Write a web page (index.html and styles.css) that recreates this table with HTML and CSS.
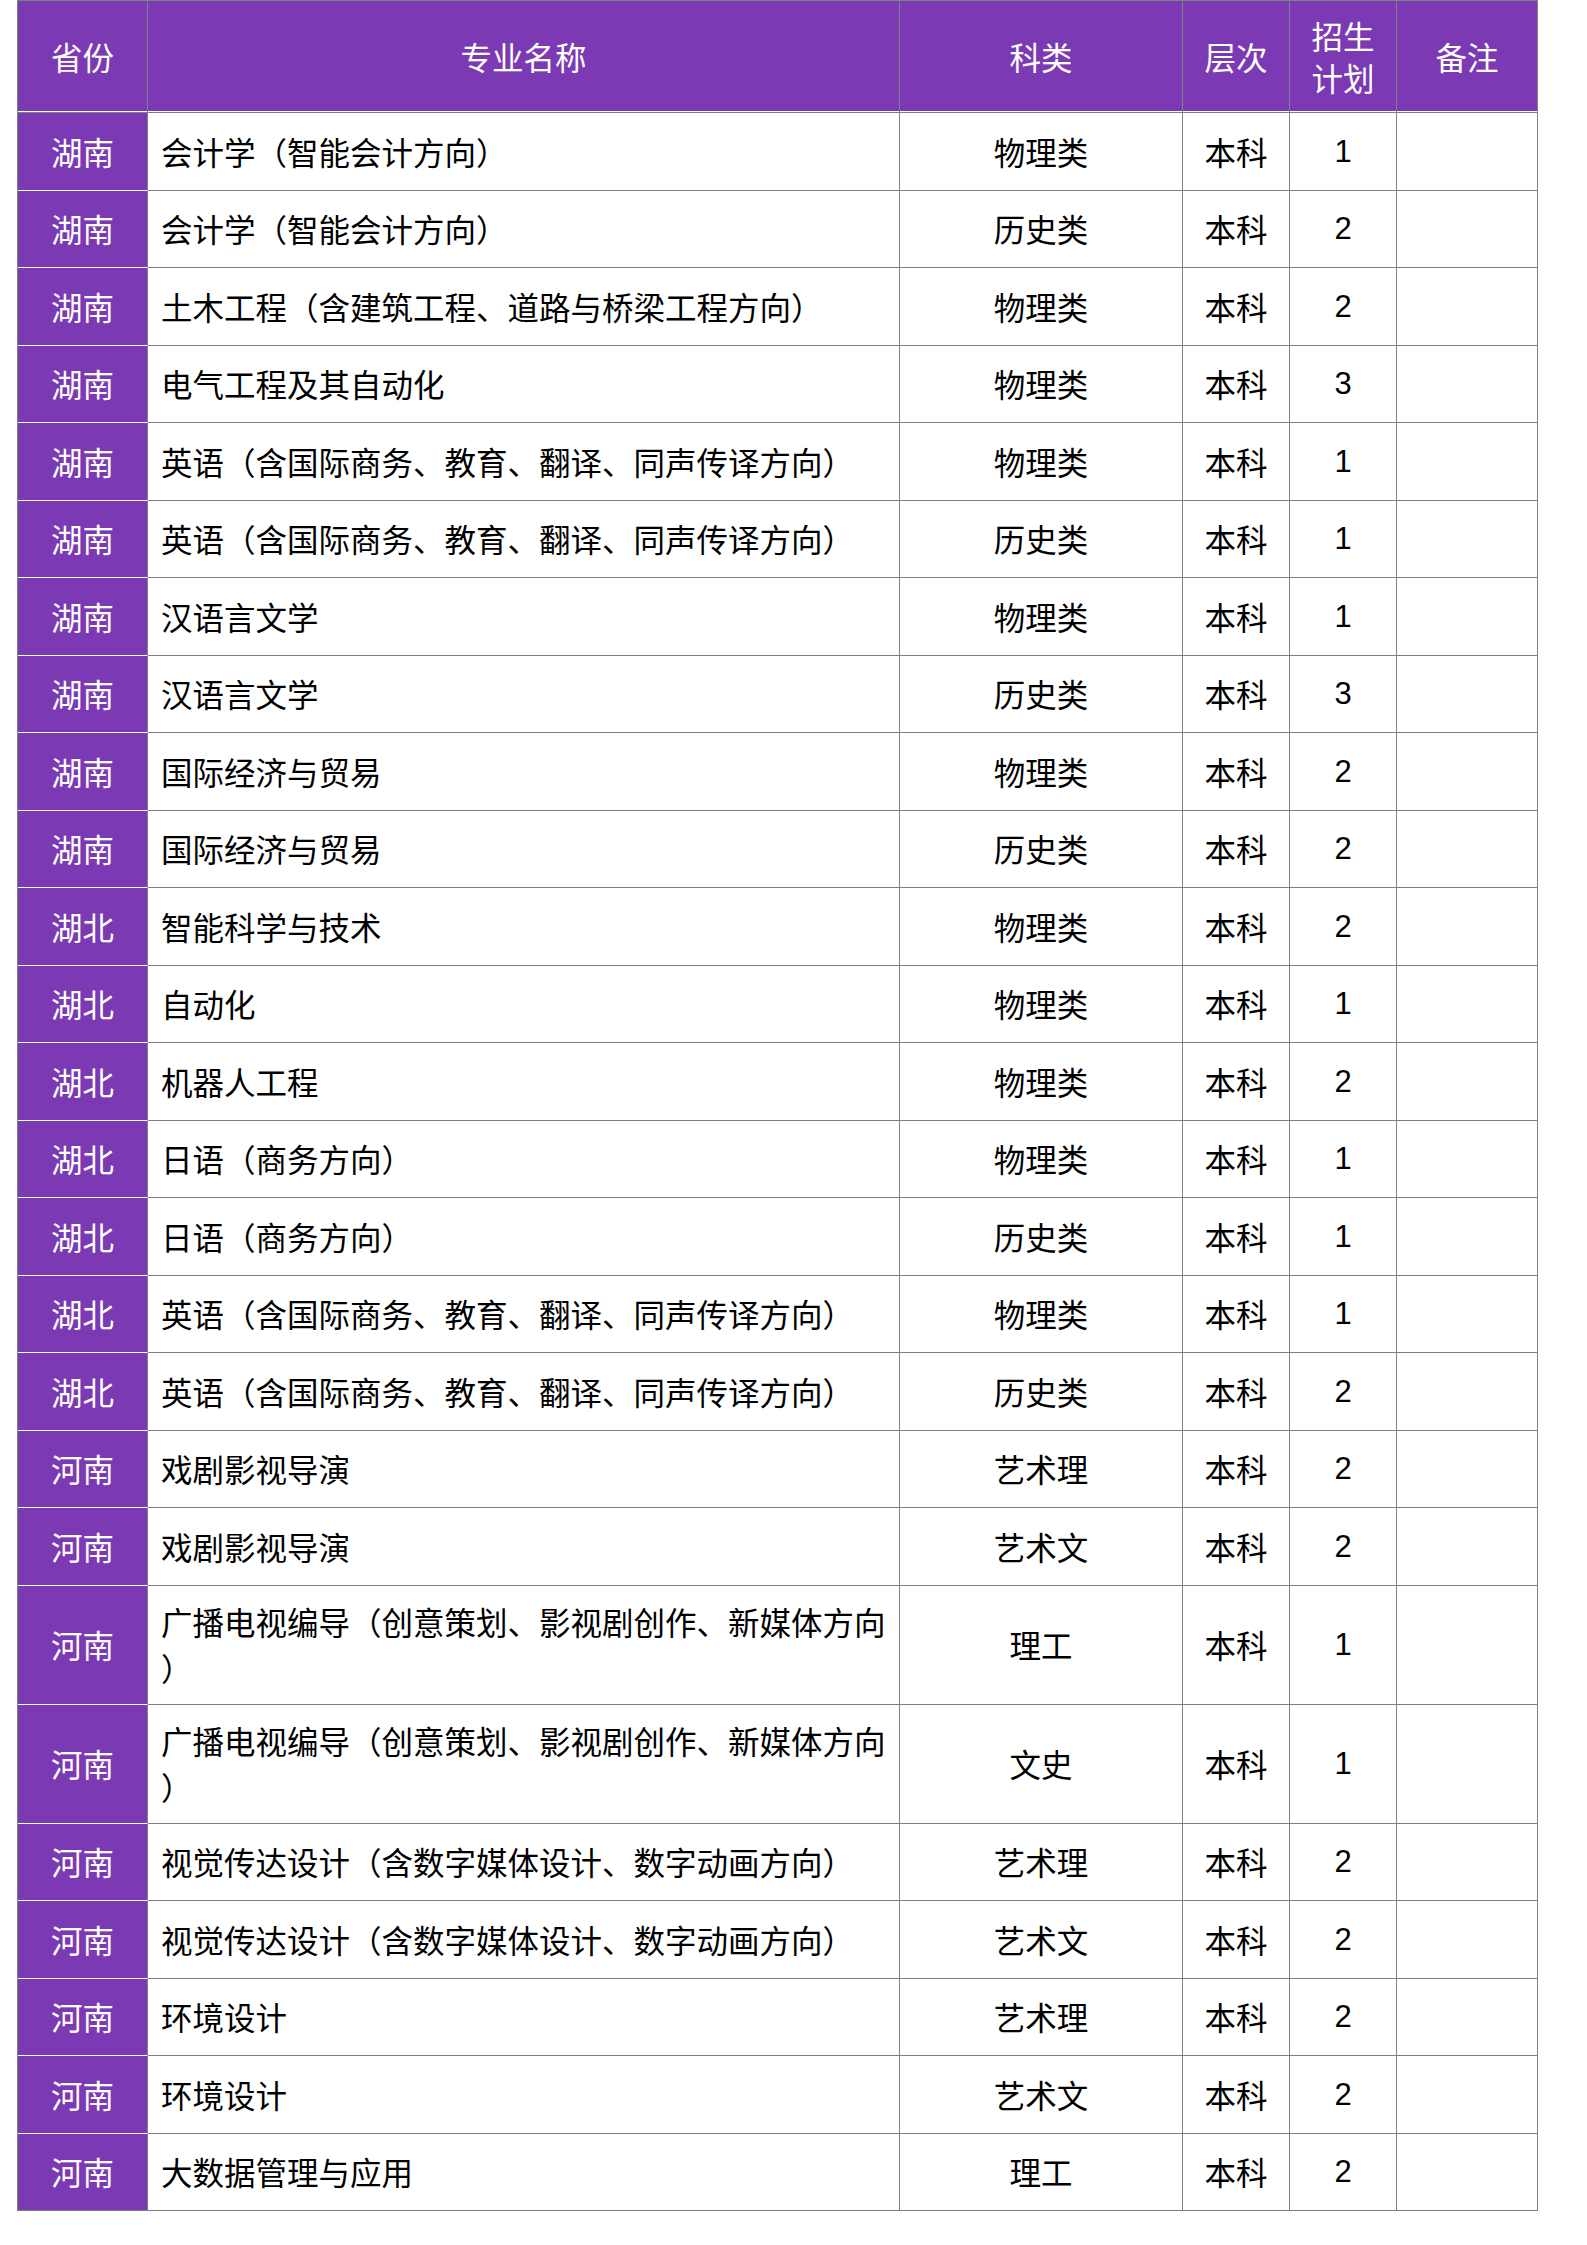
FILE: index.html
```html
<!DOCTYPE html>
<html lang="zh-CN">
<head>
<meta charset="utf-8">
<title>招生计划</title>
<link rel="stylesheet" href="styles.css">
</head>
<body>
<table class="plan">
  <thead>
    <tr>
      <th class="c-prov">省份</th>
      <th class="c-major">专业名称</th>
      <th class="c-type">科类</th>
      <th class="c-level">层次</th>
      <th class="c-num">招生计划</th>
      <th class="c-note">备注</th>
    </tr>
  </thead>
  <tbody>
    <tr><td class="prov">湖南</td><td class="major">会计学（智能会计方向）</td><td class="mid">物理类</td><td class="mid">本科</td><td class="num">1</td><td></td></tr>
    <tr><td class="prov">湖南</td><td class="major">会计学（智能会计方向）</td><td class="mid">历史类</td><td class="mid">本科</td><td class="num">2</td><td></td></tr>
    <tr><td class="prov">湖南</td><td class="major">土木工程（含建筑工程、道路与桥梁工程方向）</td><td class="mid">物理类</td><td class="mid">本科</td><td class="num">2</td><td></td></tr>
    <tr><td class="prov">湖南</td><td class="major">电气工程及其自动化</td><td class="mid">物理类</td><td class="mid">本科</td><td class="num">3</td><td></td></tr>
    <tr><td class="prov">湖南</td><td class="major">英语（含国际商务、教育、翻译、同声传译方向）</td><td class="mid">物理类</td><td class="mid">本科</td><td class="num">1</td><td></td></tr>
    <tr><td class="prov">湖南</td><td class="major">英语（含国际商务、教育、翻译、同声传译方向）</td><td class="mid">历史类</td><td class="mid">本科</td><td class="num">1</td><td></td></tr>
    <tr><td class="prov">湖南</td><td class="major">汉语言文学</td><td class="mid">物理类</td><td class="mid">本科</td><td class="num">1</td><td></td></tr>
    <tr><td class="prov">湖南</td><td class="major">汉语言文学</td><td class="mid">历史类</td><td class="mid">本科</td><td class="num">3</td><td></td></tr>
    <tr><td class="prov">湖南</td><td class="major">国际经济与贸易</td><td class="mid">物理类</td><td class="mid">本科</td><td class="num">2</td><td></td></tr>
    <tr><td class="prov">湖南</td><td class="major">国际经济与贸易</td><td class="mid">历史类</td><td class="mid">本科</td><td class="num">2</td><td></td></tr>
    <tr><td class="prov">湖北</td><td class="major">智能科学与技术</td><td class="mid">物理类</td><td class="mid">本科</td><td class="num">2</td><td></td></tr>
    <tr><td class="prov">湖北</td><td class="major">自动化</td><td class="mid">物理类</td><td class="mid">本科</td><td class="num">1</td><td></td></tr>
    <tr><td class="prov">湖北</td><td class="major">机器人工程</td><td class="mid">物理类</td><td class="mid">本科</td><td class="num">2</td><td></td></tr>
    <tr><td class="prov">湖北</td><td class="major">日语（商务方向）</td><td class="mid">物理类</td><td class="mid">本科</td><td class="num">1</td><td></td></tr>
    <tr><td class="prov">湖北</td><td class="major">日语（商务方向）</td><td class="mid">历史类</td><td class="mid">本科</td><td class="num">1</td><td></td></tr>
    <tr><td class="prov">湖北</td><td class="major">英语（含国际商务、教育、翻译、同声传译方向）</td><td class="mid">物理类</td><td class="mid">本科</td><td class="num">1</td><td></td></tr>
    <tr><td class="prov">湖北</td><td class="major">英语（含国际商务、教育、翻译、同声传译方向）</td><td class="mid">历史类</td><td class="mid">本科</td><td class="num">2</td><td></td></tr>
    <tr><td class="prov">河南</td><td class="major">戏剧影视导演</td><td class="mid">艺术理</td><td class="mid">本科</td><td class="num">2</td><td></td></tr>
    <tr><td class="prov">河南</td><td class="major">戏剧影视导演</td><td class="mid">艺术文</td><td class="mid">本科</td><td class="num">2</td><td></td></tr>
    <tr><td class="prov">河南</td><td class="major wrap">广播电视编导（创意策划、影视剧创作、新媒体方向<br>）</td><td class="mid">理工</td><td class="mid">本科</td><td class="num">1</td><td></td></tr>
    <tr><td class="prov">河南</td><td class="major wrap">广播电视编导（创意策划、影视剧创作、新媒体方向<br>）</td><td class="mid">文史</td><td class="mid">本科</td><td class="num">1</td><td></td></tr>
    <tr><td class="prov">河南</td><td class="major">视觉传达设计（含数字媒体设计、数字动画方向）</td><td class="mid">艺术理</td><td class="mid">本科</td><td class="num">2</td><td></td></tr>
    <tr><td class="prov">河南</td><td class="major">视觉传达设计（含数字媒体设计、数字动画方向）</td><td class="mid">艺术文</td><td class="mid">本科</td><td class="num">2</td><td></td></tr>
    <tr><td class="prov">河南</td><td class="major">环境设计</td><td class="mid">艺术理</td><td class="mid">本科</td><td class="num">2</td><td></td></tr>
    <tr><td class="prov">河南</td><td class="major">环境设计</td><td class="mid">艺术文</td><td class="mid">本科</td><td class="num">2</td><td></td></tr>
    <tr><td class="prov">河南</td><td class="major">大数据管理与应用</td><td class="mid">理工</td><td class="mid">本科</td><td class="num">2</td><td></td></tr>
  </tbody>
</table>
</body>
</html>
```

FILE: styles.css
```css
html, body {
  margin: 0;
  padding: 0;
  background: #ffffff;
}

body {
  padding-left: 17px;
  font-family: "Noto Sans CJK SC", "Liberation Sans", sans-serif;
  color: #000000;
  text-spacing-trim: space-all;
}

.plan {
  table-layout: fixed;
  width: 1521px;
  border-collapse: separate;
  border-spacing: 0;
  border-top: 1px solid #808080;
  border-left: 1px solid #808080;
}

.plan th,
.plan td {
  box-sizing: border-box;
  border-right: 1px solid #808080;
  border-bottom: 1px solid #808080;
  font-size: 31.5px;
  font-weight: normal;
  line-height: 41.4px;
  vertical-align: middle;
  text-spacing-trim: space-all;
}

.plan th {
  height: 112px;
  padding: 0 8px;
  background: #7b3ab3;
  color: #ffffff;
  text-align: center;
  box-shadow: inset 0 -1px 0 #ffffff;
}

.c-prov { width: 130px; }
.c-major { width: 752px; }
.c-type { width: 283px; }
.c-level { width: 107px; }
.c-num { width: 107px; padding: 0 21px !important; }
.c-note { width: 141px; }

.plan td {
  padding: 17.55px 8px;
}

.plan td.prov {
  background: #7b3ab3;
  color: #ffffff;
  text-align: center;
  border-bottom-color: #ffffff;
}

.plan tbody tr:last-child td.prov {
  border-bottom-color: #808080;
}

.plan td.major {
  padding-left: 13px;
  padding-right: 4px;
  text-align: left;
}

.plan td.major.wrap {
  line-height: 45.8px;
  padding-top: 13.25px;
  padding-bottom: 13.25px;
}

.plan td.mid {
  text-align: center;
}

.plan td.num {
  text-align: center;
  font-size: 31px;
  font-family: "Liberation Sans", Arial, sans-serif;
}
```
